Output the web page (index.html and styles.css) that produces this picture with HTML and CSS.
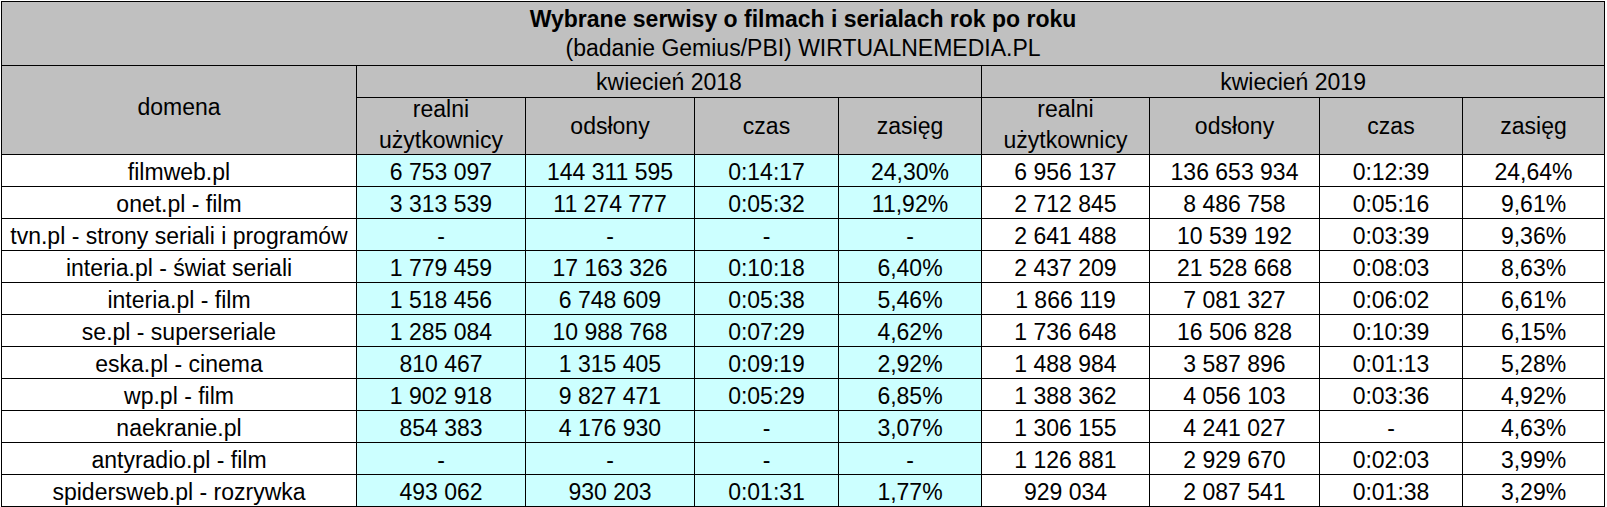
FILE: index.html
```html
<!DOCTYPE html>
<html lang="pl">
<head>
<meta charset="utf-8">
<title>Wybrane serwisy o filmach i serialach rok po roku</title>
<link rel="stylesheet" href="styles.css">
</head>
<body>
<table class="stats">
  <colgroup>
    <col class="c-domain">
    <col class="c-users"><col class="c-views"><col class="c-time"><col class="c-reach">
    <col class="c-users2"><col class="c-views2"><col class="c-time2"><col class="c-reach2">
  </colgroup>
  <thead>
    <tr class="r-title">
      <th colspan="9" class="title"><b>Wybrane serwisy o filmach i serialach rok po roku</b><br>(badanie Gemius/PBI) WIRTUALNEMEDIA.PL</th>
    </tr>
    <tr class="r-period">
      <th rowspan="2" class="domain-head">domena</th>
      <th colspan="4">kwiecień 2018</th>
      <th colspan="4">kwiecień 2019</th>
    </tr>
    <tr class="r-sub">
      <th><div class="two">realni<br>użytkownicy</div></th>
      <th>odsłony</th>
      <th>czas</th>
      <th>zasięg</th>
      <th><div class="two">realni<br>użytkownicy</div></th>
      <th>odsłony</th>
      <th>czas</th>
      <th>zasięg</th>
    </tr>
  </thead>
  <tbody>
    <tr><td>filmweb.pl</td><td class="y18">6 753 097</td><td class="y18">144 311 595</td><td class="y18">0:14:17</td><td class="y18">24,30%</td><td>6 956 137</td><td>136 653 934</td><td>0:12:39</td><td>24,64%</td></tr>
    <tr><td>onet.pl - film</td><td class="y18">3 313 539</td><td class="y18">11 274 777</td><td class="y18">0:05:32</td><td class="y18">11,92%</td><td>2 712 845</td><td>8 486 758</td><td>0:05:16</td><td>9,61%</td></tr>
    <tr><td>tvn.pl - strony seriali i programów</td><td class="y18">-</td><td class="y18">-</td><td class="y18">-</td><td class="y18">-</td><td>2 641 488</td><td>10 539 192</td><td>0:03:39</td><td>9,36%</td></tr>
    <tr><td>interia.pl - świat seriali</td><td class="y18">1 779 459</td><td class="y18">17 163 326</td><td class="y18">0:10:18</td><td class="y18">6,40%</td><td>2 437 209</td><td>21 528 668</td><td>0:08:03</td><td>8,63%</td></tr>
    <tr><td>interia.pl - film</td><td class="y18">1 518 456</td><td class="y18">6 748 609</td><td class="y18">0:05:38</td><td class="y18">5,46%</td><td>1 866 119</td><td>7 081 327</td><td>0:06:02</td><td>6,61%</td></tr>
    <tr><td>se.pl - superseriale</td><td class="y18">1 285 084</td><td class="y18">10 988 768</td><td class="y18">0:07:29</td><td class="y18">4,62%</td><td>1 736 648</td><td>16 506 828</td><td>0:10:39</td><td>6,15%</td></tr>
    <tr><td>eska.pl - cinema</td><td class="y18">810 467</td><td class="y18">1 315 405</td><td class="y18">0:09:19</td><td class="y18">2,92%</td><td>1 488 984</td><td>3 587 896</td><td>0:01:13</td><td>5,28%</td></tr>
    <tr><td>wp.pl - film</td><td class="y18">1 902 918</td><td class="y18">9 827 471</td><td class="y18">0:05:29</td><td class="y18">6,85%</td><td>1 388 362</td><td>4 056 103</td><td>0:03:36</td><td>4,92%</td></tr>
    <tr><td>naekranie.pl</td><td class="y18">854 383</td><td class="y18">4 176 930</td><td class="y18">-</td><td class="y18">3,07%</td><td>1 306 155</td><td>4 241 027</td><td>-</td><td>4,63%</td></tr>
    <tr><td>antyradio.pl - film</td><td class="y18">-</td><td class="y18">-</td><td class="y18">-</td><td class="y18">-</td><td>1 126 881</td><td>2 929 670</td><td>0:02:03</td><td>3,99%</td></tr>
    <tr><td>spidersweb.pl - rozrywka</td><td class="y18">493 062</td><td class="y18">930 203</td><td class="y18">0:01:31</td><td class="y18">1,77%</td><td>929 034</td><td>2 087 541</td><td>0:01:38</td><td>3,29%</td></tr>
  </tbody>
</table>
</body>
</html>
```

FILE: styles.css
```css
html, body {
  margin: 0;
  padding: 0;
  background: #ffffff;
}

body {
  padding: 1px 0 0 1px;
  font-family: "Liberation Sans", Arial, sans-serif;
  color: #000000;
}

.stats {
  border-collapse: collapse;
  table-layout: fixed;
  width: 1604px;
  font-size: 23px;
}

.c-domain { width: 355px; }
.c-users { width: 169px; }
.c-views { width: 169px; }
.c-time { width: 144px; }
.c-reach { width: 143px; }
.c-users2 { width: 168px; }
.c-views2 { width: 170px; }
.c-time2 { width: 143px; }
.c-reach2 { width: 142px; }

.stats th,
.stats td {
  border: 1px solid #000000;
  padding: 0;
  text-align: center;
  vertical-align: middle;
  white-space: nowrap;
  font-weight: normal;
  line-height: 26px;
}

.stats th {
  background: #c0c0c0;
}

.r-title { height: 64px; }
.r-period { height: 32px; }
.r-sub { height: 57px; }
.stats tbody tr { height: 32px; }

.stats tbody td {
  padding-top: 2px;
}

.stats th.title {
  line-height: 29.5px;
  padding-top: 1px;
}

.stats th.title b {
  font-weight: bold;
}

.stats th.domain-head {
  padding-bottom: 6px;
}

.stats th .two {
  line-height: 31px;
  margin: -7px 0 -4px;
}

.stats td.y18 {
  background: #ccffff;
}
```
